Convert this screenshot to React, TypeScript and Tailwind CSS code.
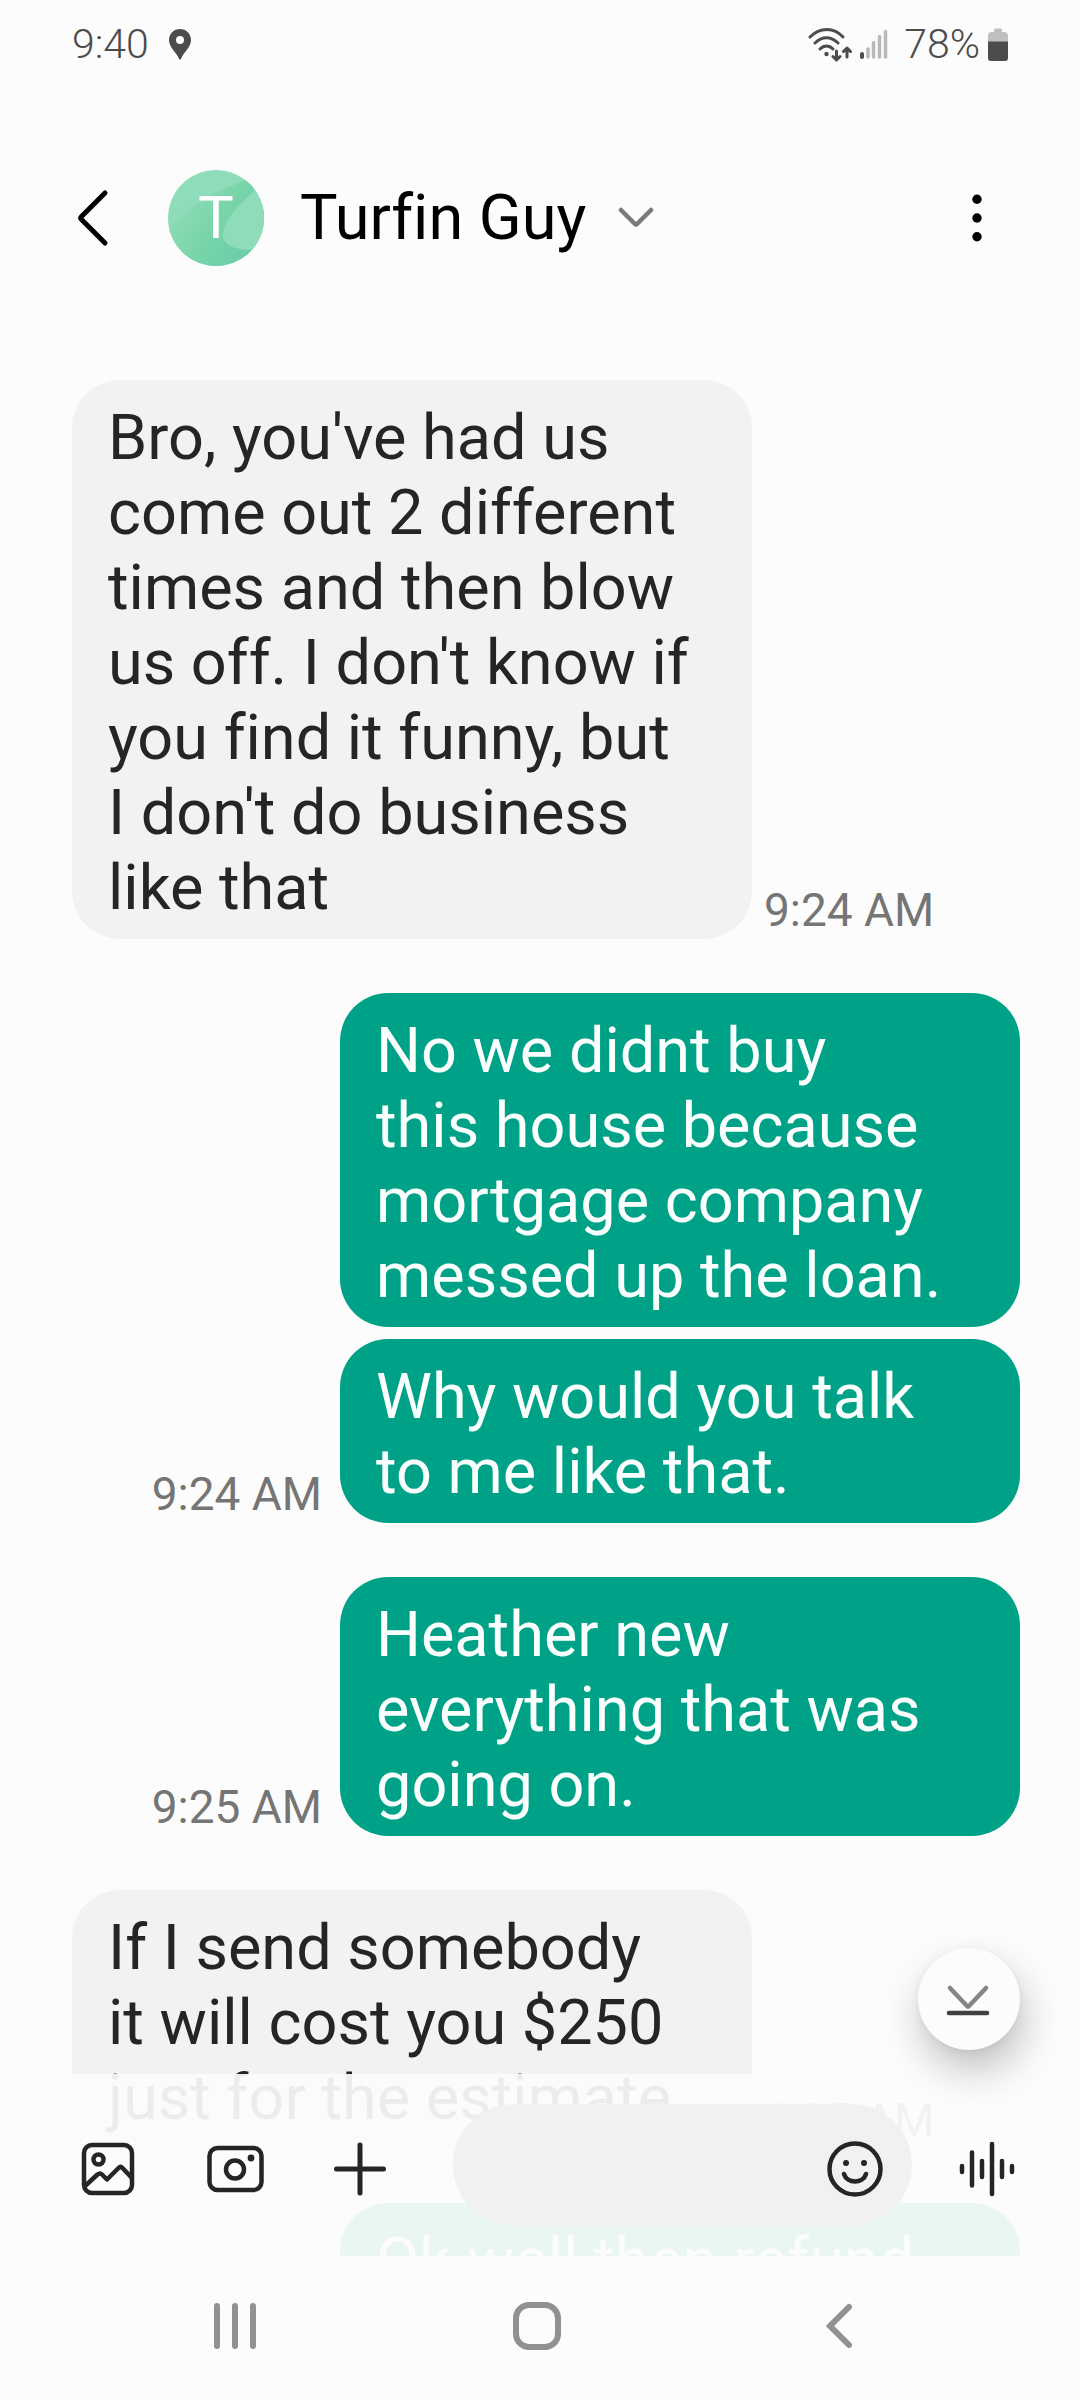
type Message = {
  from: 'them' | 'me';
  text: string;
  time?: string;
  followUp?: boolean;
};

const messages: Message[] = [
  {
    from: 'them',
    text: "Bro, you've had us\ncome out 2 different\ntimes and then blow\nus off. I don't know if\nyou find it funny, but\nI don't do business\nlike that",
    time: '9:24 AM',
  },
  { from: 'me', text: 'No we didnt buy\nthis house because\nmortgage company\nmessed up the loan.' },
  { from: 'me', text: 'Why would you talk\nto me like that.', time: '9:24 AM', followUp: true },
  { from: 'me', text: 'Heather new\neverything that was\ngoing on.', time: '9:25 AM' },
  { from: 'them', text: 'If I send somebody\nit will cost you $250\njust for the estimate', time: '9:25 AM' },
  { from: 'me', text: 'Ok well then refund' },
];

export default function App() {
  return (
    <div className="flex h-screen flex-col overflow-hidden bg-[#fcfcfc] font-['Roboto',sans-serif] text-[#252525] [font-variant-ligatures:none]">
      <StatusBar />
      <Header />

      {/* Conversation, with the composer floating over its lower edge */}
      <main className="relative flex-1 overflow-hidden">
        <ul className="flex flex-col pr-[60px] pl-[72px]">
          {messages.map((message) => (
            <MessageRow key={message.text} message={message} />
          ))}
        </ul>
        <Composer />
        <button
          aria-label="Scroll to latest"
          className="absolute right-[60px] bottom-[206px] flex size-[102px] items-center justify-center rounded-full bg-[#fcfcfc] shadow-[4px_20px_40px_rgba(0,0,0,0.24),0_2px_8px_rgba(0,0,0,0.06)]"
        >
          <svg width="48" height="36" viewBox="0 0 48 36" fill="none" strokeWidth="4.5" strokeLinecap="round" strokeLinejoin="round">
            <path d="M5 7l17 18q1 1 2 0L41 7" stroke="#858585" />
            <path d="M4 32h38" stroke="#404040" />
          </svg>
        </button>
      </main>

      <NavBar />
    </div>
  );
}

function StatusBar() {
  return (
    <div className="flex h-[88px] items-center justify-between px-[72px] text-[41px] leading-[48px] font-light text-[#4c4c4c]">
      <div className="flex items-center gap-5">
        <span>9:40</span>
        <svg width="22" height="31" viewBox="0 0 22 31" fill="#4c4c4c">
          <path fillRule="evenodd" d="M11 0C4.9 0 0 4.9 0 11c0 7.500 8 13 9.800 18.500L11 31l1.200-1.500C14 24 22 18.500 22 11 22 4.900 17.100 0 11 0zm0 7a4 4 0 110 8 4 4 0 010-8z" />
        </svg>
      </div>
      <div className="flex items-center">
        <svg width="44" height="36" viewBox="0 0 44 36" fill="none" stroke="#4c4c4c" strokeWidth="3" strokeLinecap="round" strokeLinejoin="round">
          <path d="M2 11c10-10 24-10 33 0M7 17c7-7 16-7 23 0M12 23c4-4 9-4 13 0" />
          <circle cx="18.500" cy="28" r="2.200" fill="#4c4c4c" stroke="none" />
          <path d="M28.500 25v9M25 30.500l3.500 3.500 3.500-3.500M39 31v-9M35.500 25.500L39 22l3.500 3.500" />
        </svg>
        <svg className="ml-2" width="28" height="30" viewBox="0 0 28 30" strokeWidth="4" strokeLinecap="round">
          <path d="M2 25v3" stroke="#4c4c4c" />
          <path d="M8 20v8M13.500 13.500v14.500M19.500 7.500v20.500M25.500 2.500v25.500" stroke="#b9b9b9" strokeWidth="3.500" />
        </svg>
        <span className="ml-4">78%</span>
        <svg className="ml-2" width="20" height="33" viewBox="0 0 20 33">
          <path d="M6 2a1.500 1.500 0 011.500-1.500h5A1.500 1.500 0 0114 2v2h2a4 4 0 014 4v6H0V8a4 4 0 014-4h2z" fill="#bfbfbf" />
          <path d="M0 13.500h20V30a3 3 0 01-3 3H3a3 3 0 01-3-3z" fill="#4c4c4c" />
        </svg>
      </div>
    </div>
  );
}

function Header() {
  return (
    <header className="flex h-[260px] items-center pr-[83px] pl-[75px] text-black">
      <button aria-label="Back">
        <svg width="36" height="60" viewBox="0 0 36 60" fill="none" stroke="#000" strokeWidth="5" strokeLinecap="round" strokeLinejoin="round">
          <path d="M30 5L6.500 28.500Q5 30 6.500 31.500L30 55" />
        </svg>
      </button>
      <div className="relative ml-[57px] flex size-24 items-center justify-center overflow-hidden rounded-full">
        <svg className="absolute inset-0" width="96" height="96" viewBox="0 0 96 96">
          <defs>
            <linearGradient id="leaf" x1="0.1" y1="0.3" x2="0.9" y2="0.8">
              <stop offset="0" stopColor="#8fdcb8" />
              <stop offset="0.5" stopColor="#77d5a8" />
              <stop offset="1" stopColor="#6cccab" />
            </linearGradient>
          </defs>
          <rect width="96" height="96" fill="#8edcb9" />
          <path d="M0 60C20 35 50 20 78 10L96 5v91H0z" fill="url(#leaf)" />
          <path d="M92 16C70 34 55 52 55 65c0 10 12 15 29 15h12V13z" fill="#8edcb9" />
        </svg>
        <span className="relative text-[60px] leading-[60px] text-white">T</span>
      </div>
      <button className="ml-9 flex items-center gap-8">
        <h1 className="pb-0.5 text-[63px] leading-[75px]">Turfin Guy</h1>
        <svg width="36" height="24" viewBox="0 0 36 24" fill="none" stroke="#7a7a7a" strokeWidth="4.5" strokeLinecap="round" strokeLinejoin="round">
          <path d="M3 4l14 14q1 1 2 0L33 4" />
        </svg>
      </button>
      <button aria-label="More options" className="ml-auto">
        <svg width="40" height="48" viewBox="0 0 40 48" fill="#000">
          <circle cx="20" cy="5.300" r="4.700" />
          <circle cx="20" cy="24" r="4.700" />
          <circle cx="20" cy="42.700" r="4.700" />
        </svg>
      </button>
    </header>
  );
}

function MessageRow({ message }: { message: Message }) {
  const mine = message.from === 'me';
  return (
    <li
      className={`flex items-end ${mine ? 'flex-row-reverse gap-[18px]' : 'gap-3'} ${
        message.followUp ? 'mt-3' : 'mt-[54px] first:mt-8'
      }`}
    >
      <p
        className={`w-[680px] rounded-[48px] px-9 pt-5 pb-3.5 text-[63px] leading-[75px] whitespace-pre-line ${
          mine ? 'bg-[#00a287] text-[#fafffe]' : 'bg-[#f2f2f2]'
        }`}
      >
        {message.text}
      </p>
      {message.time && <time className="pb-0.5 text-[46px] leading-[54px] text-[#757575]">{message.time}</time>}
    </li>
  );
}

function Composer() {
  return (
    <form className="absolute inset-x-0 bottom-0 flex h-[182px] items-center bg-[#fcfcfc]/93 pr-[60px] pl-[78px]">
      <button type="button" aria-label="Gallery" className="pt-2">
        <svg width="60" height="60" viewBox="0 0 60 60" fill="none" stroke="#252525" strokeWidth="4.500" strokeLinecap="round" strokeLinejoin="round">
          <rect x="6" y="6" width="48" height="48" rx="8" />
          <circle cx="20.500" cy="20.500" r="5" />
          <path d="M7 47l12.500-11.500q2.500-2 4.500 0l5 5L40.500 29q2-2 4 0l8.500 9" />
        </svg>
      </button>
      <button type="button" aria-label="Camera" className="ml-[67px] pt-2">
        <svg width="60" height="60" viewBox="0 0 60 60" fill="none" stroke="#252525" strokeWidth="4.500">
          <rect x="4.500" y="9" width="52" height="42" rx="8" />
          <circle cx="30" cy="30.500" r="9" />
          <circle cx="46" cy="19" r="3.400" fill="#252525" stroke="none" />
        </svg>
      </button>
      <button type="button" aria-label="Add" className="ml-[65px] pt-2">
        <svg width="60" height="60" viewBox="0 0 60 60" stroke="#252525" strokeWidth="5" strokeLinecap="round">
          <path d="M30 6v48M6.500 30h47" />
        </svg>
      </button>
      <div className="ml-[63px] flex h-[122px] min-w-0 flex-1 items-center rounded-full bg-[#f1f1f1] pr-[27px] pl-9">
        <input aria-label="Message" className="min-w-0 flex-1 bg-transparent text-[46px] outline-none" />
        <button type="button" aria-label="Emoji" className="pt-2">
          <svg width="60" height="60" viewBox="0 0 60 60" fill="none" stroke="#252525" strokeWidth="4.500" strokeLinecap="round">
            <circle cx="30" cy="30" r="25.500" />
            <path d="M19 35c3 10 19 10 22 0" />
            <circle cx="21" cy="24" r="3" fill="#252525" stroke="none" />
            <circle cx="39" cy="24" r="3" fill="#252525" stroke="none" />
          </svg>
        </button>
      </div>
      <button type="button" aria-label="Voice message" className="ml-11 pt-2">
        <svg width="64" height="60" viewBox="0 0 64 60" stroke="#252525" strokeWidth="4.500" strokeLinecap="round">
          <path d="M6 27v6M16 13.500v33M26 22v16M36 5v50M46 22v16M56 27v6" />
        </svg>
      </button>
    </form>
  );
}

function NavBar() {
  return (
    <nav className="flex h-36 items-center justify-around pr-[90px] pb-1 pl-[84px]">
      <button aria-label="Recent apps">
        <svg width="60" height="60" viewBox="0 0 60 60" stroke="#919191" strokeWidth="6" strokeLinecap="round">
          <path d="M12 10v40M30 10v40M48 10v40" />
        </svg>
      </button>
      <button aria-label="Home">
        <svg width="60" height="60" viewBox="0 0 60 60" fill="none" stroke="#919191" strokeWidth="6">
          <rect x="9" y="9" width="42" height="42" rx="13" />
        </svg>
      </button>
      <button aria-label="Back">
        <svg width="60" height="60" viewBox="0 0 60 60" fill="none" stroke="#919191" strokeWidth="6" strokeLinecap="round" strokeLinejoin="miter">
          <path d="M40 11L21 30l19 19" />
        </svg>
      </button>
    </nav>
  );
}
